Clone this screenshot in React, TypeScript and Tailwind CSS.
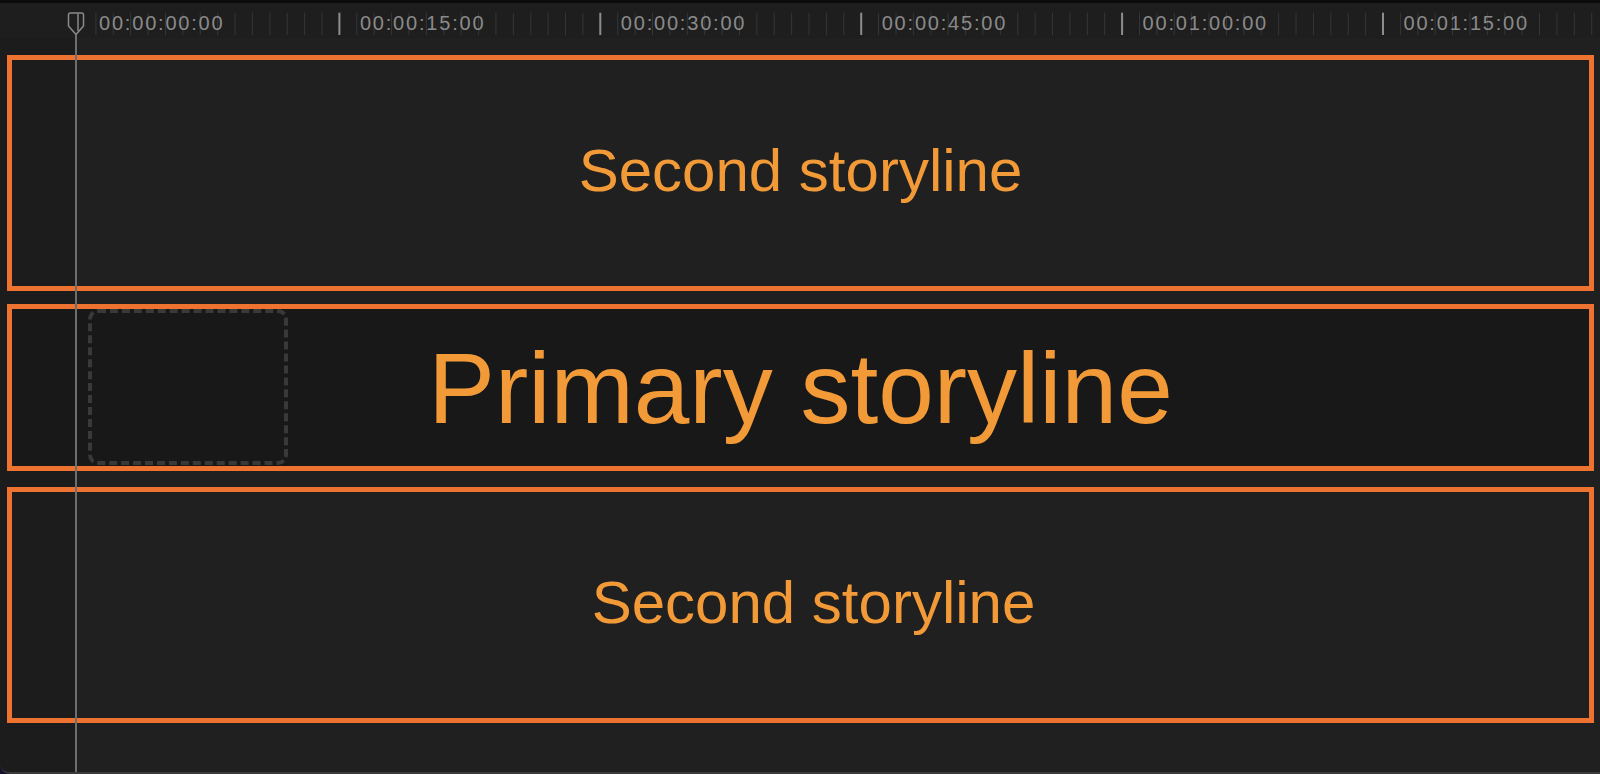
const MAJOR = 260.9
const ORIGIN = 78.5
const STEP = MAJOR / 15

const labels = [
  '00:00:00:00',
  '00:00:15:00',
  '00:00:30:00',
  '00:00:45:00',
  '00:01:00:00',
  '00:01:15:00',
]

function Ruler() {
  const ticks: number[] = []
  for (let j = 1; ORIGIN + j * STEP < 1600; j++) ticks.push(j)

  return (
    <div className="relative h-[35px] bg-[#1e1e1e]">
      <svg className="absolute inset-0" width="1600" height="35">
        {ticks.map((j) => {
          const x = ORIGIN + j * STEP
          return j % 15 === 0 ? (
            <rect key={j} x={x - 1} y={9.7} width={2} height={22.3} fill="#8d8d8d" />
          ) : (
            <rect key={j} x={x - 0.5} y={9.7} width={1} height={22.3} fill="#363636" />
          )
        })}
      </svg>

      {labels.map((label, k) => (
        <span
          key={label}
          className="absolute top-[10px] text-[20px] leading-[20px] tracking-[1.8px] text-[#8a8a8a]"
          style={{ left: ORIGIN + k * MAJOR + 20.5 }}
        >
          {label}
        </span>
      ))}

      {/* playhead head */}
      <svg className="absolute left-[67px] top-[9px]" width="18" height="24" viewBox="0 0 18 24">
        <path
          d="M1.5 3 Q1.5 1 3.5 1 H14.5 Q16.5 1 16.5 3 V14 L9 22.5 L1.5 14 Z"
          fill="#1e1e1e"
          stroke="#8a8a8a"
          strokeWidth="1.5"
          strokeLinejoin="round"
        />
        <line x1="11" y1="1.5" x2="11" y2="19" stroke="#8a8a8a" strokeWidth="1.5" />
      </svg>
    </div>
  )
}

function Storyline({
  label,
  className,
  textClass,
  children,
}: {
  label: string
  className: string
  textClass: string
  children?: React.ReactNode
}) {
  return (
    <div
      className={`relative flex items-center justify-center border-[5px] border-[#ef7330] ${className}`}
    >
      {children}
      <span className={`leading-none text-[#f39a38] ${textClass}`}>{label}</span>
    </div>
  )
}

export default function App() {
  return (
    <div className="min-h-screen bg-[#17122b]">
      <div className="relative h-[774px] w-[1600px] overflow-hidden rounded-bl-[10px] border-b-2 border-[#3a3a3a] bg-[#202020] font-['Liberation_Sans',Arial,sans-serif]">
        <div className="h-[3px] bg-[#0b0b0b]" />
        <Ruler />

        <div className="flex h-[734px] flex-col bg-[linear-gradient(to_right,#1c1c1c_76px,#202020_76px)] pl-[7px] pr-[6px] pt-[17px]">
          <Storyline label="Second storyline" className="h-[236px] pb-[4px]" textClass="text-[60px]" />

          <Storyline
            label="Primary storyline"
            className="mt-[13px] h-[167px] bg-[#181818]"
            textClass="text-[100px]"
          >
            <div className="absolute bottom-[1px] left-[76px] top-0 w-[200px] rounded-[10px] border-[4px] border-dashed border-[#393939]" />
          </Storyline>

          <Storyline
            label="Second storyline"
            className="mt-[16px] h-[236px] pb-[4px] pl-[26px]"
            textClass="text-[60px]"
          />
        </div>

        {/* playhead line */}
        <div className="absolute bottom-0 left-[75px] top-[35px] w-[2px] bg-[#6e6e6e]" />
      </div>
    </div>
  )
}
